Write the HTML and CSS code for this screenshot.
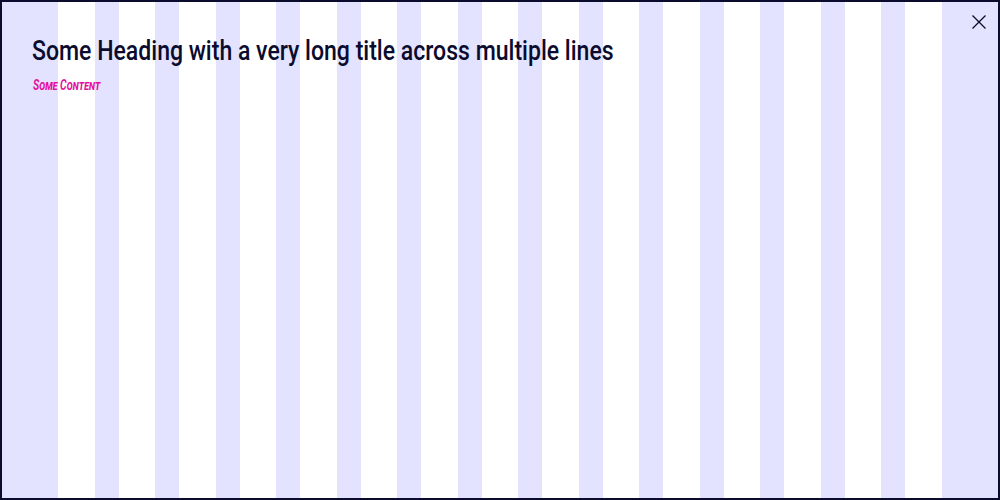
FILE: index.html
```html
<!DOCTYPE html>
<html lang="en">
<head>
    <meta charset="UTF-8">
    <meta name="viewport" content="width=device-width, initial-scale=1.0">
    <title>Dialog</title>
    <link rel="stylesheet" href="styles.css">
</head>
<body>
    <div class="dialog">
        <div class="grid-overlay">
            <span></span><span></span><span></span><span></span><span></span>
            <span></span><span></span><span></span><span></span><span></span>
            <span></span><span></span><span></span><span></span><span></span>
        </div>
        <div class="dialog-body">
            <h1 class="dialog-title"><span>Some Heading with a very long title across multiple lines</span></h1>
            <p class="dialog-content"><span>Some Content</span></p>
        </div>
        <button class="close-btn" aria-label="Close">
            <svg width="16" height="16" viewBox="0 0 16 16">
                <path d="M1.5 1.5 L14.5 14.5 M14.5 1.5 L1.5 14.5" stroke="#0b0b2e" stroke-width="1.3" fill="none"/>
            </svg>
        </button>
    </div>
</body>
</html>
```

FILE: styles.css
```css
body {
    margin: 0;
    padding: 0;
    font-family: Roboto, "Liberation Sans", Arial, sans-serif;
    color: #0b0b2e;
}

.dialog {
    position: relative;
    width: 1000px;
    height: 500px;
    box-sizing: border-box;
    border: 2px solid #0b0b2e;
    background-color: #ffffff;
}

/* layout grid shown behind content */
.grid-overlay {
    position: absolute;
    inset: 0;
    display: grid;
    grid-template-columns: repeat(15, 1fr);
    column-gap: 24px;
    padding: 0 56px;
    background-color: #e3e3ff;
}

.grid-overlay span {
    background-color: #ffffff;
}

.dialog-body {
    position: relative;
    padding: 32px 30px;
}

/* condensed look */
.dialog-title span,
.dialog-content span {
    display: inline-block;
    transform-origin: left center;
}

.dialog-title {
    margin: 0;
    font-size: 28px;
    font-weight: 500;
    line-height: 1.2;
}

.dialog-title span {
    transform: scaleX(0.823);
}

.dialog-content {
    margin: 9px 0 0 1px;
    font-size: 14px;
    font-weight: bold;
    font-style: italic;
    font-variant: small-caps;
    color: #e5109c;
}

.dialog-content span {
    transform: scaleX(0.74);
}

.close-btn {
    position: absolute;
    top: 12px;
    right: 11px;
    padding: 0;
    border: none;
    background: none;
    cursor: pointer;
    line-height: 0;
}
```
